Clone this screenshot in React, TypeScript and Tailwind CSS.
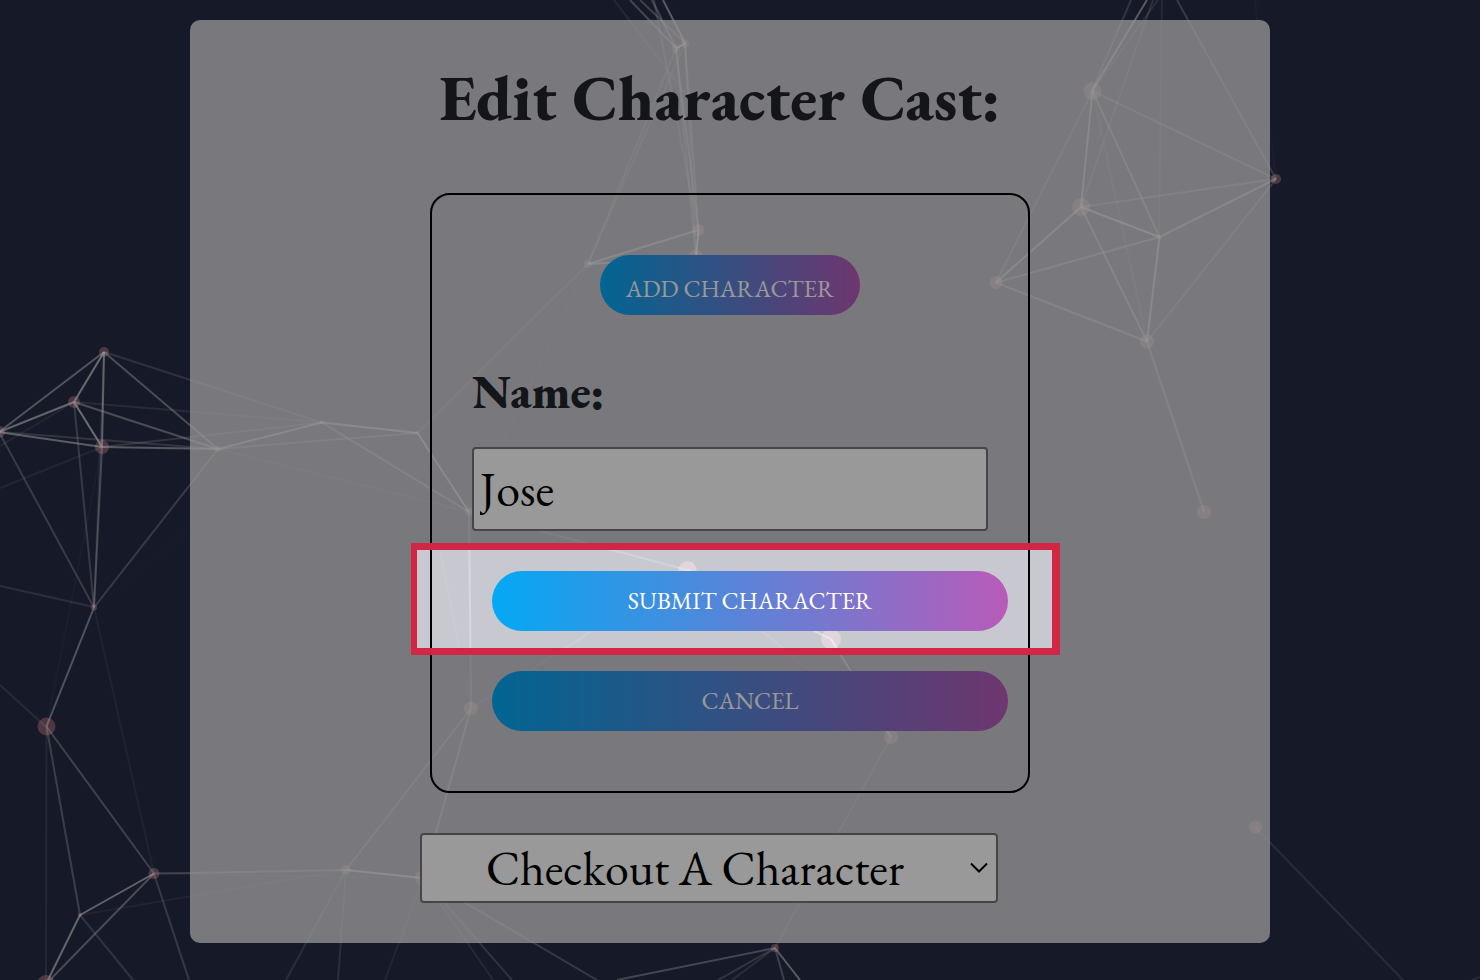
import { useState } from 'react';

// Particle nodes: x, y, radius
const nodes: [number, number, number][] = [
  [104, 352, 5], [74, 402, 6], [-1, 432, 6], [102, 447, 7], [218, 449, 3], [322, 422.5, 2],
  [417.5, 433, 2], [469, 512, 4], [94, 607.5, 3], [46.5, 726.5, 9], [154, 873.5, 5.5], [80, 915, 2],
  [46, 984, 9], [346, 870, 5], [423, 878, 8], [471, 708.5, 7], [687.5, 570, 9], [831, 639, 10],
  [891, 737, 7], [775, 948, 4], [1255.5, 827, 6.5], [1204, 512, 7], [1147, 341.5, 7], [996, 282.5, 6.5],
  [1081, 207, 9], [1159.5, 237, 2], [1276, 179, 5], [1092.5, 91, 9], [698.5, 230, 6], [696, 258, 8],
  [588, 264, 4], [685, 43.5, 4], [676, 48.5, 4],
];

// Links that leave the visible area: x1, y1, x2, y2, opacity
const edgeLinks: [number, number, number, number, number][] = [
  [0, 446, 74, 402, 0.1], [0, 488, 102, 447, 0.1], [0, 586, 94, 607, 0.17], [0, 685, 46, 727, 0.14],
  [80, 915, 133, 980, 0.2], [154, 874, 189, 980, 0.25], [346, 870, 286, 980, 0.16], [346, 870, 338, 980, 0.16],
  [423, 878, 385, 980, 0.1], [423, 878, 493, 980, 0.12], [423, 878, 512, 980, 0.2], [423, 878, 597, 980, 0.25],
  [775, 948, 617, 980, 0.35], [775, 948, 718, 980, 0.22], [775, 948, 732, 980, 0.16], [775, 948, 784, 980, 0.3],
  [775, 948, 800, 980, 0.5], [1255, 827, 1403, 980, 0.15], [1472, 980, 1480, 977, 0.12],
  [1131, 0, 1092, 91, 0.22], [1147, 0, 1092, 91, 0.5], [1158, 0, 1092, 91, 0.15], [1153, 0, 1081, 207, 0.18],
  [1162, 0, 1159, 237, 0.12], [1177, 0, 1276, 179, 0.25], [1255, 0, 1276, 179, 0.04],
  [614, 0, 698, 110, 0.12], [630, 0, 676, 48, 0.35], [640, 0, 685, 43, 0.3], [652, 0, 676, 48, 0.35],
  [654, 0, 698, 230, 0.2], [663, 0, 685, 43, 0.5],
];

const REACH = 300;

function Particles() {
  const links = nodes.flatMap(([x1, y1], i) =>
    nodes.slice(i + 1).flatMap(([x2, y2]) => {
      const d = Math.hypot(x1 - x2, y1 - y2);
      return d < REACH ? [[x1, y1, x2, y2, 0.8 * (1 - d / REACH)]] : [];
    }),
  );
  return (
    <svg className="absolute left-0 top-0" width="1480" height="980" viewBox="0 0 1480 980" aria-hidden="true">
      {nodes.map(([x, y, r], i) => (
        <circle key={i} cx={x} cy={y} r={r} fill="#f59ca4" fillOpacity="0.45" />
      ))}
      {[...links, ...edgeLinks].map(([x1, y1, x2, y2, o], i) => (
        <line key={i} x1={x1} y1={y1} x2={x2} y2={y2} stroke="#ffffff" strokeWidth="2" strokeOpacity={o} />
      ))}
    </svg>
  );
}

const pill =
  'h-[60px] rounded-full bg-linear-to-r/srgb from-[#03a9f4] to-[#b85bb9] text-center text-2xl text-white uppercase';

export default function App() {
  const [name, setName] = useState('Jose');
  return (
    <div className="relative min-h-screen overflow-hidden bg-[#262a44] py-5 pr-5 font-['EB_Garamond','Liberation_Serif',serif] text-[#21242b]">
      <Particles />
      <main className="relative mx-auto flex max-w-[1080px] flex-col items-center rounded-[10px] bg-white/75 py-10">
        <h1 className="mb-[57px] pr-5 text-center text-[64px] leading-[76px] font-extrabold">Edit Character Cast:</h1>

        <form
          className="flex w-full max-w-[600px] flex-col rounded-[20px] border-2 border-black px-10 py-[60px]"
          onSubmit={(e) => e.preventDefault()}
        >
          <button type="button" className={`${pill} w-[260px] self-center pt-2`}>
            Add Character
          </button>
          <label htmlFor="name" className="mt-12 mb-7 text-[48px] leading-[56px] font-extrabold">
            Name:
          </label>
          <input
            id="name"
            value={name}
            onChange={(e) => setName(e.target.value)}
            className="h-[84px] w-full rounded-[4px] border-2 border-[#767676] bg-white px-1.5 text-[48px] text-black"
          />
          <div className="relative mt-10 -mr-5 ml-5 flex flex-col">
            <button type="submit" className={pill}>
              Submit Character
            </button>
            <div className="pointer-events-none absolute -top-7 -right-[52px] -bottom-6 -left-[81px] z-10 border-x-[6px] border-y-[7px] border-r-8 border-[#d12646] shadow-[0_0_0_2000px_rgba(0,0,0,0.4)]" />
          </div>
          <button type="button" className={`${pill} mt-10 -mr-5 ml-5`}>
            Cancel
          </button>
        </form>

        <div className="mt-10 w-full max-w-[620px]">
          <div className="relative flex max-w-[578px] items-center">
            <select
              aria-label="Checkout A Character"
              className="h-[70px] w-full appearance-none rounded-[4px] border-2 border-[#767676] bg-white pr-7 text-center text-[48px] leading-[60px] text-black"
            >
              <option>Checkout A Character</option>
            </select>
            <svg
              className="pointer-events-none absolute right-2.5"
              width="18"
              height="10"
              viewBox="0 0 18 10"
              fill="none"
              stroke="black"
              strokeWidth="2"
              aria-hidden="true"
            >
              <path d="M1 0.5 9 8.5 17 0.5" />
            </svg>
          </div>
        </div>
      </main>
    </div>
  );
}
